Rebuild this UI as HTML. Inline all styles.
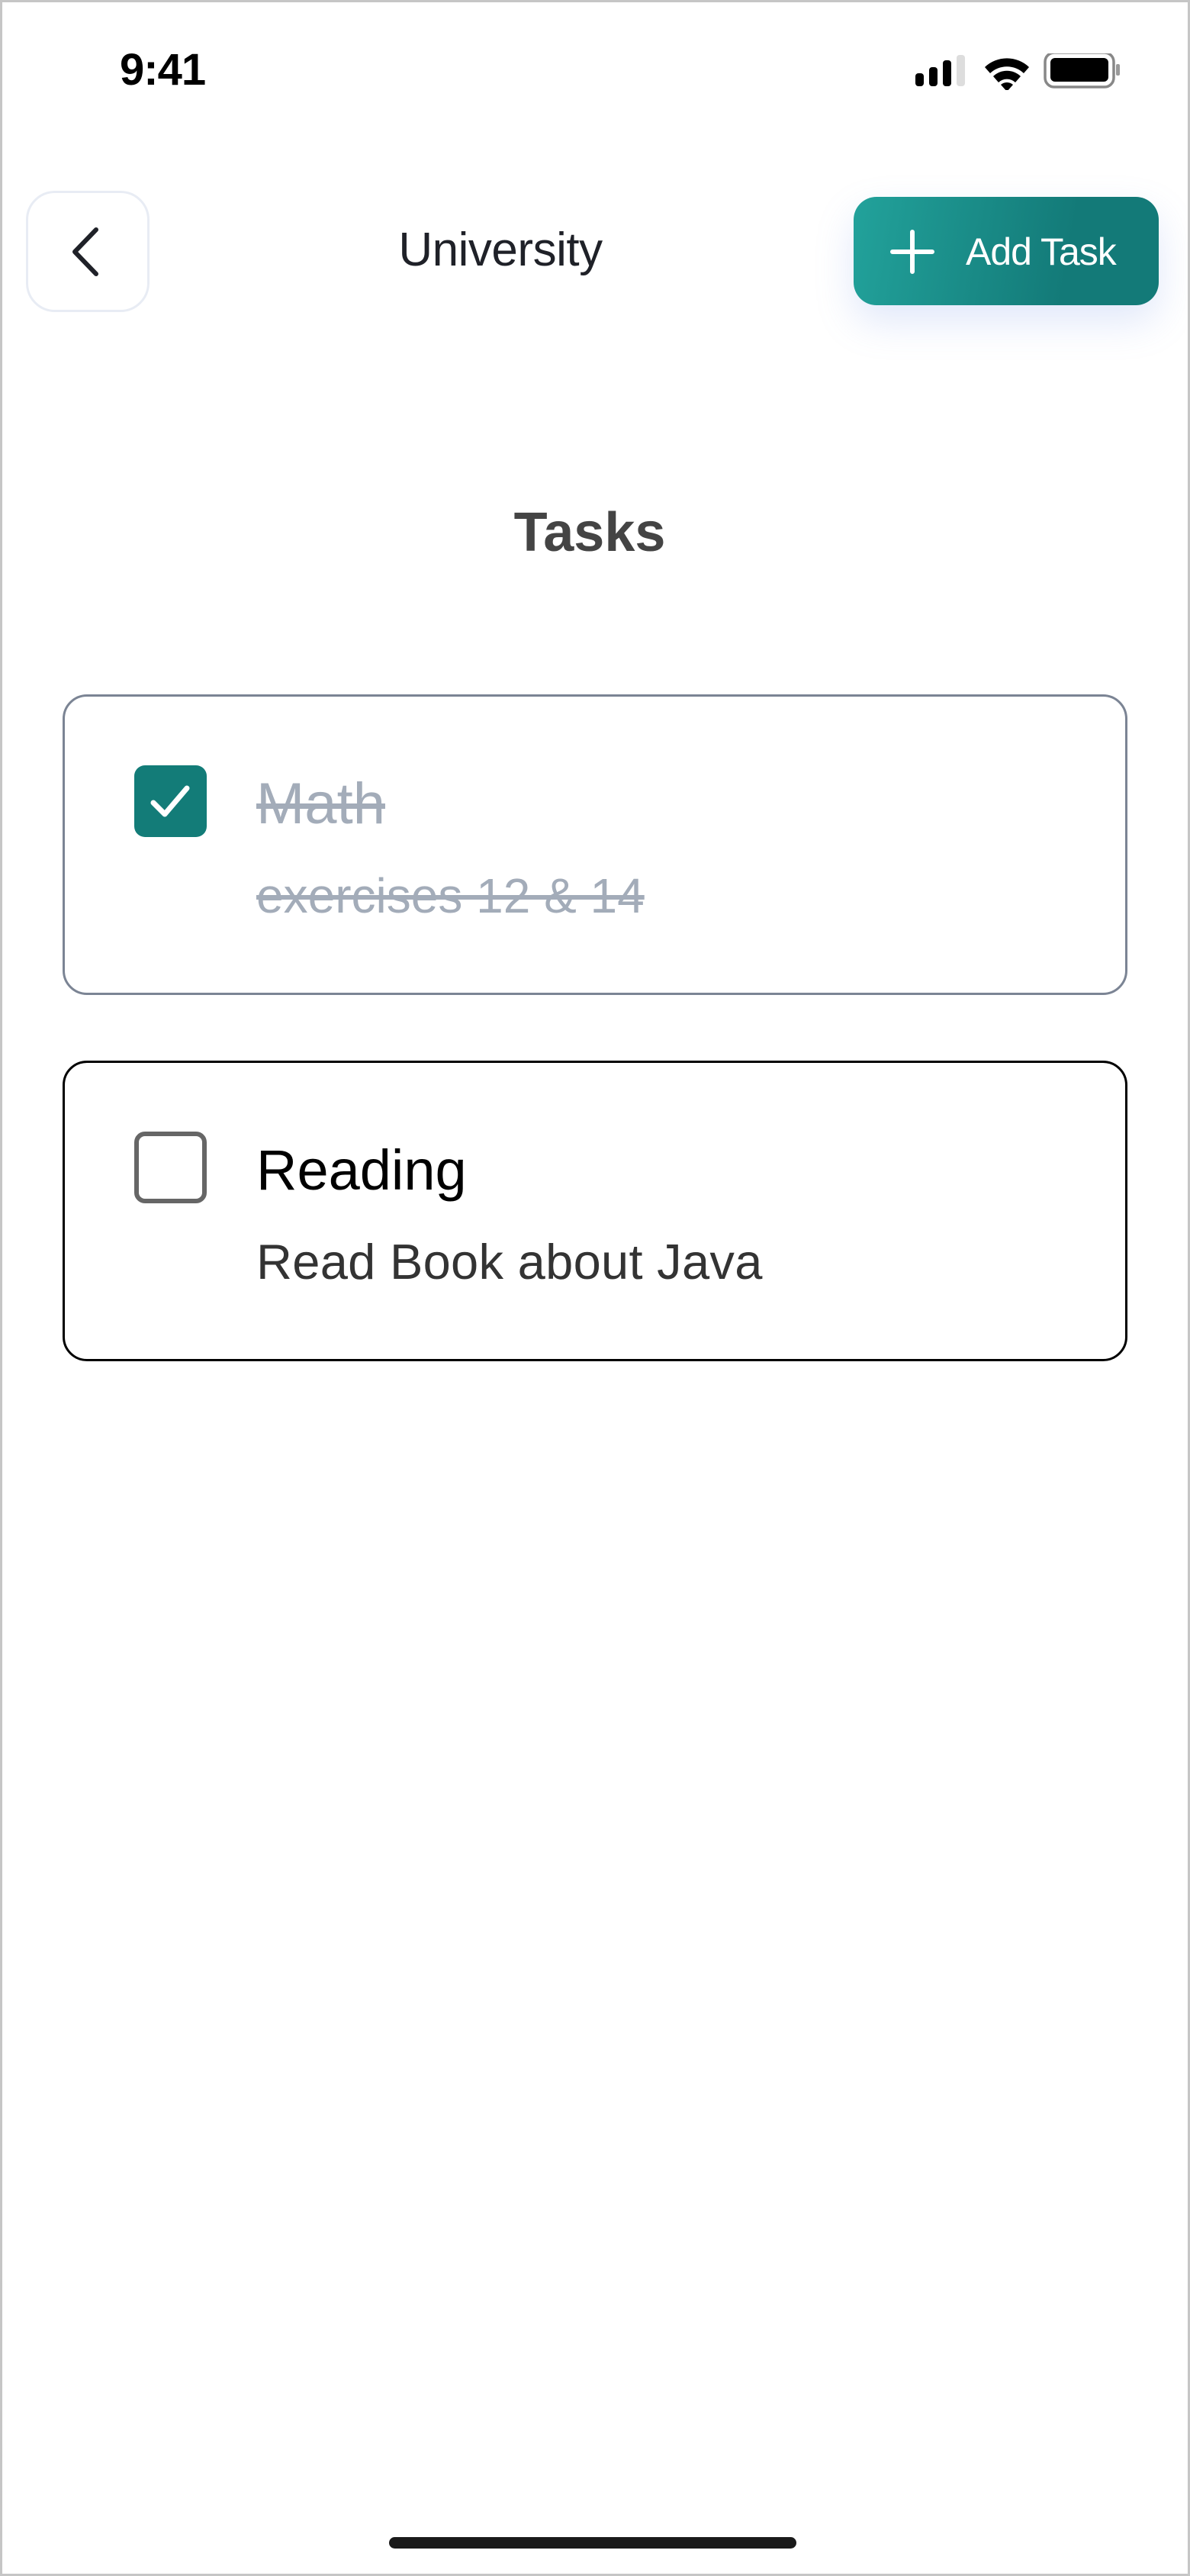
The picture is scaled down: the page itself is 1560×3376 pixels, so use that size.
<!DOCTYPE html>
<html><head><meta charset="utf-8"><style>
*{margin:0;padding:0;box-sizing:border-box}
html,body{width:1560px;height:3376px;background:#fff;overflow:hidden}
body{position:relative;font-family:"Liberation Sans",sans-serif}
.a{position:absolute}
</style></head><body>
<div class="a" style="left:157px;top:58px;font-size:58px;font-weight:bold;color:#000;letter-spacing:-1px">9:41</div>
<svg class="a" style="left:1198px;top:70px" width="272" height="48" viewBox="1198 70 272 48">
<rect x="1200" y="96" width="11" height="17" rx="4" fill="#000"/>
<rect x="1218" y="88" width="11" height="25" rx="4" fill="#000"/>
<rect x="1236" y="79" width="11" height="34" rx="4" fill="#000"/>
<rect x="1254" y="72" width="11" height="41" rx="4" fill="#ddd"/>
<path d="M1291 88 A42 42 0 0 1 1349 88 L1342 96 A32 32 0 0 0 1298 96 Z" fill="#000"/>
<path d="M1302 100 A26 26 0 0 1 1338 100 L1331 108 A16 16 0 0 0 1309 108 Z" fill="#000"/>
<path d="M1312 111 A12 12 0 0 1 1328 111 L1320 120 Z" fill="#000"/>
<rect x="1370" y="69" width="90" height="45" rx="12" fill="none" stroke="#888" stroke-width="3.5"/>
<rect x="1377" y="76" width="76" height="31" rx="6" fill="#000"/>
<rect x="1463" y="84" width="5" height="15" rx="2" fill="#999"/>
</svg>
<div class="a" style="left:34px;top:250px;width:162px;height:159px;border:3px solid #e8ecf4;border-radius:38px"></div>
<svg class="a" style="left:80px;top:290px" width="60" height="80" viewBox="0 0 60 80"><path d="M46 11 L18 40 L46 69" fill="none" stroke="#1f2128" stroke-width="6" stroke-linecap="round" stroke-linejoin="round"/></svg>
<div class="a" style="left:456px;top:292px;width:400px;text-align:center;font-size:62px;color:#1f2128;letter-spacing:-0.5px">University</div>
<div class="a" style="left:1119px;top:258px;width:400px;height:142px;border-radius:30px;background:linear-gradient(100deg,#22a29b,#137a78 70%);box-shadow:0 22px 50px rgba(120,150,230,0.22)"></div>
<svg class="a" style="left:1166px;top:300px" width="60" height="60" viewBox="0 0 60 60"><path d="M30 4V56M4 30H56" stroke="#fff" stroke-width="6" stroke-linecap="round"/></svg>
<div class="a" style="left:1266px;top:301px;font-size:50px;color:#fff;letter-spacing:-1px">Add Task</div>
<div class="a" style="left:573px;top:657px;width:400px;text-align:center;font-size:72px;font-weight:bold;color:#444">Tasks</div>

<div class="a" style="left:82px;top:910px;width:1396px;height:394px;border:3px solid #7b8494;border-radius:32px"></div>
<div class="a" style="left:176px;top:1003px;width:95px;height:94px;background:#137c78;border-radius:14px"></div>
<svg class="a" style="left:176px;top:1003px" width="95" height="94" viewBox="0 0 95 94"><path d="M25 49 L40 64 L69 30" fill="none" stroke="#fff" stroke-width="7" stroke-linecap="round" stroke-linejoin="round"/></svg>
<div class="a" style="left:336px;top:1010px;font-size:76px;color:#a3acb9;text-decoration:line-through">Math</div>
<div class="a" style="left:336px;top:1137px;font-size:64px;color:#a3acb9;text-decoration:line-through">exercises 12 &amp; 14</div>

<div class="a" style="left:82px;top:1390px;width:1396px;height:394px;border:3px solid #000;border-radius:32px"></div>
<div class="a" style="left:176px;top:1483px;width:95px;height:94px;border:6px solid #666;border-radius:14px"></div>
<div class="a" style="left:336px;top:1491px;font-size:74px;color:#000">Reading</div>
<div class="a" style="left:336px;top:1616px;font-size:65px;color:#333;letter-spacing:0.3px">Read Book about Java</div>

<div class="a" style="left:510px;top:3325px;width:534px;height:15px;border-radius:8px;background:#1a1a1a"></div>
<div class="a" style="left:0;top:0;width:1560px;height:3376px;border:3px solid #c6c6c6;pointer-events:none"></div>
</body></html>
